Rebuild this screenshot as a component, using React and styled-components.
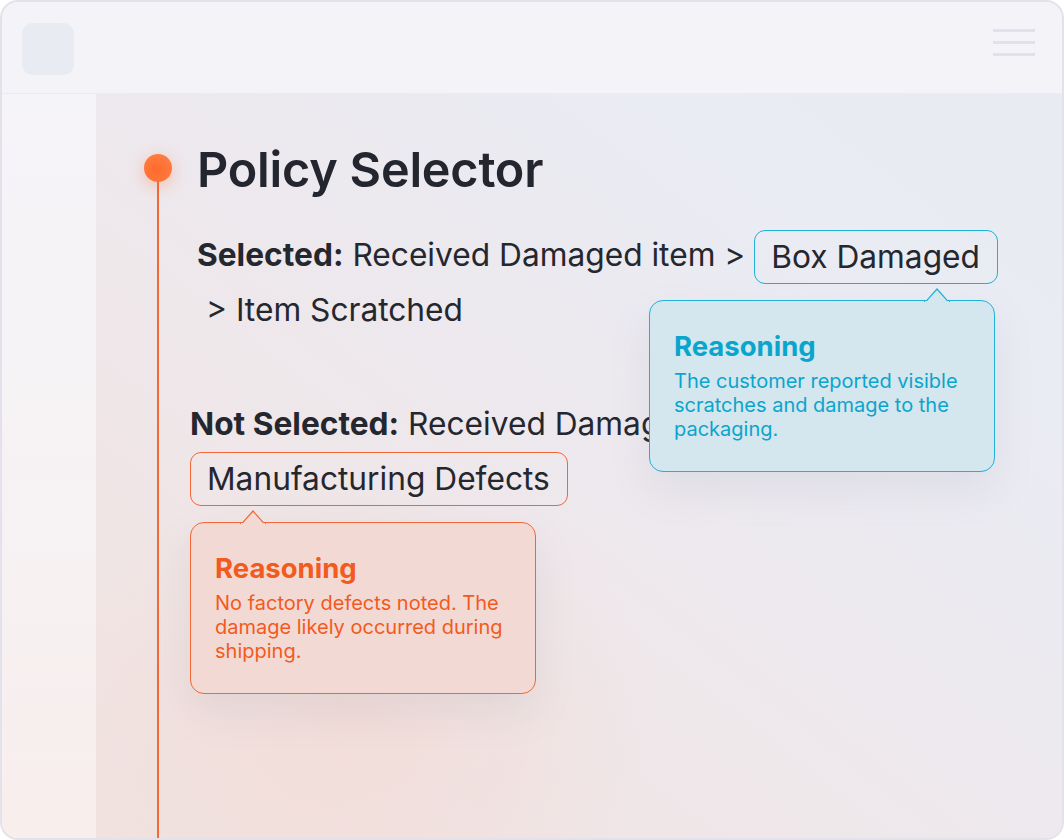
import React from "react";
import styled, { createGlobalStyle } from "styled-components";

const Global = createGlobalStyle`
  html, body { margin: 0; padding: 0; background: #ffffff; }
  * { box-sizing: border-box; }
  body { font-family: Inter, "Noto Sans", sans-serif; }
`;

const Window = styled.div`
  width: 1064px;
  height: 840px;
  border: 2px solid #e3e2eb;
  border-radius: 18px;
  overflow: hidden;
  display: flex;
  flex-direction: column;
  background: #f4f3f8;
`;

const Header = styled.header`
  height: 92px;
  flex: none;
  display: flex;
  align-items: center;
  justify-content: space-between;
  padding: 0 27px 0 20px;
  background: #f4f3f8;
  border-bottom: 1px solid #ecebf2;
`;

const Logo = styled.div`
  width: 52px;
  height: 52px;
  border-radius: 11px;
  background: #e8ebf1;
  margin-top: 2px;
`;

const Burger = styled.div`
  width: 42px;
  display: flex;
  flex-direction: column;
  gap: 9px;
  margin-bottom: 10px;
  span {
    display: block;
    height: 3px;
    background: #dfe2ea;
  }
`;

const Body = styled.div`
  flex: 1;
  display: flex;
  min-height: 0;
`;

const Sidebar = styled.aside`
  width: 94px;
  flex: none;
  background: linear-gradient(to bottom, #f5f4f8 0%, #f6f2f4 50%, #f8eeec 100%);
`;

const Main = styled.main`
  flex: 1;
  display: grid;
  grid-template-columns: 28px 1fr;
  column-gap: 25px;
  padding-left: 48px;
  background:
    radial-gradient(ellipse 420px 360px at 260px 620px, rgba(244, 214, 206, 0.55), transparent 70%),
    linear-gradient(to top right, #f1e2df 0%, #eee8ec 45%, #eaebf3 75%, #e9ebf4 100%);
`;

const Rail = styled.div`
  display: flex;
  flex-direction: column;
  align-items: center;
  padding-top: 60px;
`;

const Dot = styled.div`
  width: 28px;
  height: 28px;
  border-radius: 50%;
  flex: none;
  background: radial-gradient(circle at 45% 60%, #ff6a2c 0%, #ff7b40 70%, #ff8650 100%);
  box-shadow: 0 4px 16px rgba(255, 110, 50, 0.35);
`;

const Line = styled.div`
  width: 2px;
  flex: 1;
  background: #f46a37;
  margin-top: -1px;
`;

const Content = styled.section`
  padding-top: 46px;
  width: 830px;
  color: #25272f;
`;

const Title = styled.h1`
  margin: 0 0 29px;
  font-size: 48.5px;
  line-height: 60px;
  font-weight: 600;
  letter-spacing: -0.2px;
  color: #23252f;
`;

const Statement = styled.div`
  font-size: 31.7px;
  line-height: 52px;
  font-weight: 400;
  color: #25272f;
  margin-left: ${(p) => p.$shift || 0}px;
  margin-bottom: ${(p) => p.$after || 0}px;
  position: relative;
  strong { font-weight: 700; }
`;

const Continue = styled.div`
  padding-left: 9px;
`;

const ChipWrap = styled.span`
  position: relative;
  display: inline-block;
  vertical-align: middle;
  z-index: 2;
`;

const Chip = styled.span`
  display: inline-block;
  height: 54px;
  line-height: 52px;
  padding: 0 17px 0 16px;
  border: 1px solid ${(p) => p.$tone};
  border-radius: 11px;
  color: #25272f;
`;

const Tip = styled.div`
  position: absolute;
  top: 70px;
  ${(p) => (p.$align === "right" ? "right: 3px;" : "left: 0;")}
  width: 346px;
  height: 172px;
  padding: 28px 24px;
  border: 1px solid ${(p) => p.$tone};
  border-radius: 14px;
  background: ${(p) => p.$bg};
  box-shadow: 0 18px 40px rgba(120, 130, 160, 0.12);
  color: ${(p) => p.$text};
  z-index: 3;
`;

const Arrow = styled.svg`
  position: absolute;
  top: -13px;
  ${(p) => (p.$align === "right" ? "right: 44px;" : "left: 49px;")}
  width: 26px;
  height: 14px;
  overflow: visible;
`;

const TipTitle = styled.div`
  font-size: 27.5px;
  line-height: 34px;
  font-weight: 700;
  margin-bottom: 6px;
`;

const TipText = styled.p`
  margin: 0;
  font-size: 20px;
  line-height: 24px;
  font-weight: 400;
`;

function Tooltip({ tone, bg, text, align, children }) {
  return (
    <Tip $tone={tone} $bg={bg} $text={text} $align={align}>
      <Arrow $align={align} viewBox="0 0 26 14">
        <path d="M0 13.5 L2 13.5 L13 1 L24 13.5 L26 13.5" fill={bg} stroke={tone} strokeWidth="1.2" />
        <rect x="1" y="13" width="24" height="2" fill={bg} />
      </Arrow>
      <TipTitle>Reasoning</TipTitle>
      <TipText>{children}</TipText>
    </Tip>
  );
}

export default function App() {
  const teal = "#1fb1d8";
  const orange = "#f26735";
  return (
    <>
      <Global />
      <Window>
        <Header>
          <Logo />
          <Burger>
            <span />
            <span />
            <span />
          </Burger>
        </Header>
        <Body>
          <Sidebar />
          <Main>
            <Rail>
              <Dot />
              <Line />
            </Rail>
            <Content>
              <Title>Policy Selector</Title>
              <Statement $after={62}>
                <strong>Selected:</strong> Received Damaged item &gt;{" "}
                <ChipWrap>
                  <Chip $tone={teal}>Box Damaged</Chip>
                  <Tooltip tone={teal} bg="#d4e6ee" text="#0aa5cd" align="right">
                    The customer reported visible scratches and damage to the packaging.
                  </Tooltip>
                </ChipWrap>
                <Continue>&gt; Item Scratched</Continue>
              </Statement>
              <Statement $shift={-7}>
                <strong>Not Selected:</strong> Received Damaged item &gt;{" "}
                <ChipWrap>
                  <Chip $tone={orange}>Manufacturing Defects</Chip>
                  <Tooltip tone={orange} bg="#f2d9d3" text="#f25a20" align="left">
                    No factory defects noted. The damage likely occurred during shipping.
                  </Tooltip>
                </ChipWrap>
              </Statement>
            </Content>
          </Main>
        </Body>
      </Window>
    </>
  );
}
